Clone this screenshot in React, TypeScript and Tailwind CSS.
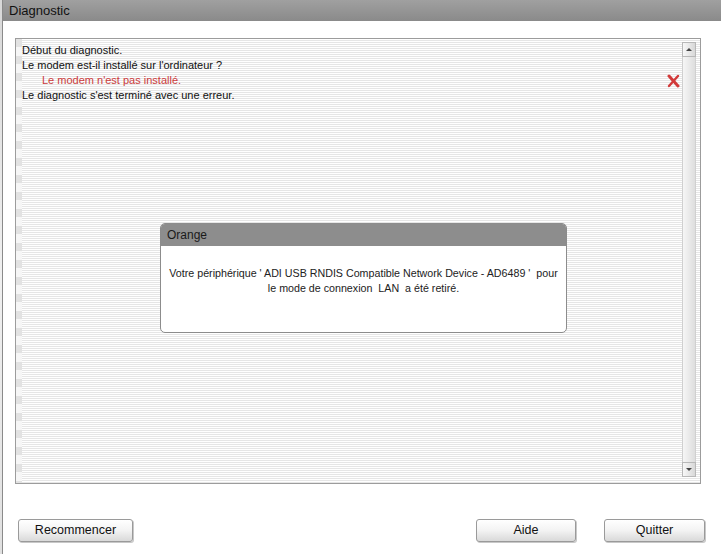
const stripes =
  "bg-[repeating-linear-gradient(to_bottom,#ffffff_0px,#ffffff_1px,#e6e6e6_1px,#e6e6e6_2px)]";

function RedCross() {
  return (
    <svg width="13" height="14" viewBox="0 0 13 14" className="shrink-0">
      <path d="M2 2 L11 12" stroke="#d23a3a" strokeWidth="3" strokeLinecap="round" />
      <path d="M11 2 L2 12" stroke="#d23a3a" strokeWidth="2.4" strokeLinecap="round" />
    </svg>
  );
}

function Button({ label, width }: { label: string; width: string }) {
  return (
    <button
      className={`${width} h-[23px] rounded-[3px] border border-[#9a9a9a] bg-gradient-to-b from-white via-[#f3f3f3] to-[#d9d9d9] text-[12.5px] text-[#111] shadow-[1px_1px_0_#c8c8c8]`}
    >
      {label}
    </button>
  );
}

export default function App() {
  return (
    <div
      className="flex h-[554px] w-[721px] overflow-hidden bg-white"
      style={{ fontFamily: '"Liberation Sans", Arial, sans-serif' }}
    >
      <div className="w-[2px] bg-gradient-to-b from-[#d8d8d8] via-[#f0f0f0] to-[#e0e0e0]"></div>
      <div className="flex flex-1 flex-col border-l border-[#8a8a8a]">
        <div className="flex h-[21px] items-center bg-gradient-to-b from-[#a0a0a0] to-[#8a8a8a] pl-[6px] text-[13px] text-[#111]">
          Diagnostic
        </div>

        <div className="flex flex-1 flex-col pt-[17px] pl-[12px] pr-[16px]">
          <div className="relative mr-[4px] flex h-[446px] border border-[#9c9c9c]">
            <div className="w-[6px] bg-[repeating-linear-gradient(to_bottom,#e2e2e2_0px,#e2e2e2_8px,#f6f6f6_8px,#f6f6f6_17px)]"></div>
            <div className={`flex flex-1 flex-col pt-[4px] text-[11px] leading-[15px] text-[#111] ${stripes}`}>
              <div>Début du diagnostic.</div>
              <div>Le modem est-il installé sur l'ordinateur ?</div>
              <div className="flex items-center justify-between pr-[2px]">
                <span className="pl-[20px] text-[#cc3b3b]">Le modem n'est pas installé.</span>
                <RedCross />
              </div>
              <div>Le diagnostic s'est terminé avec une erreur.</div>
            </div>
            <div className={`flex w-[18px] flex-col pt-[3px] pb-[6px] pr-[4px] ${stripes}`}>
              <div className="flex h-[15px] items-center justify-center border border-[#b8b8b8] bg-gradient-to-r from-[#f8f8f8] to-[#d8d8d8]">
                <div className="h-0 w-0 border-x-[3px] border-b-[3px] border-x-transparent border-b-[#444]"></div>
              </div>
              <div className="flex-1 border-x border-[#d0d0d0] bg-gradient-to-r from-[#f6f6f6] to-[#dedede]"></div>
              <div className="flex h-[15px] items-center justify-center border border-[#b8b8b8] bg-gradient-to-r from-[#f8f8f8] to-[#d8d8d8]">
                <div className="h-0 w-0 border-x-[3px] border-t-[3px] border-x-transparent border-t-[#444]"></div>
              </div>
            </div>

            <div className="absolute top-[184px] left-[144px] flex h-[110px] w-[407px] flex-col overflow-hidden rounded-[5px] border border-[#8c8c8c] bg-white">
              <div className="flex h-[22px] items-center bg-[#8d8d8d] pl-[6px] text-[12px] text-[#1a1a1a]">
                Orange
              </div>
              <div className="pt-[20px] text-center text-[10.7px] leading-[15px] text-[#222]">
                <div>Votre périphérique ' ADI USB RNDIS Compatible Network Device - AD6489 '&nbsp; pour</div>
                <div>le mode de connexion&nbsp; LAN&nbsp; a été retiré.</div>
              </div>
            </div>
          </div>

          <div className="mt-[35px] flex items-center pl-[3px]">
            <Button label="Recommencer" width="w-[115px]" />
            <div className="flex-1"></div>
            <Button label="Aide" width="w-[100px]" />
            <div className="w-[28px]"></div>
            <Button label="Quitter" width="w-[101px]" />
          </div>
        </div>
      </div>
    </div>
  );
}
